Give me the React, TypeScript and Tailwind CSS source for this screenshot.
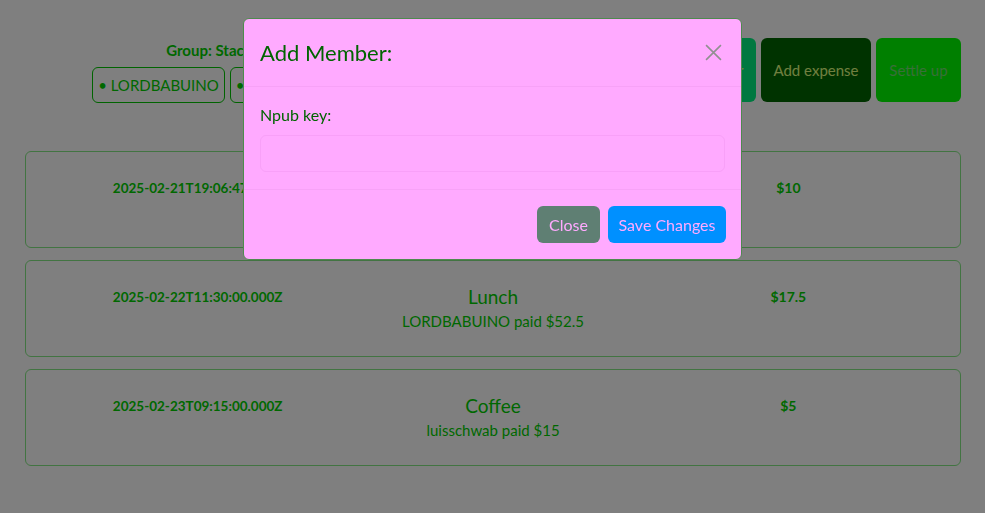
import React from "react";

type Expense = {
  date: string;
  title: string;
  payer: string;
  paid: string;
  share: string;
};

const expenses: Expense[] = [
  { date: "2025-02-21T19:06:47.000Z", title: "Dinner", payer: "LORDBABUINO", paid: "$30", share: "$10" },
  { date: "2025-02-22T11:30:00.000Z", title: "Lunch", payer: "LORDBABUINO", paid: "$52.5", share: "$17.5" },
  { date: "2025-02-23T09:15:00.000Z", title: "Coffee", payer: "luisschwab", paid: "$15", share: "$5" },
];

const members = ["LORDBABUINO", "luisschwab"];

function ExpenseRow({ e }: { e: Expense }) {
  return (
    <div className="grid h-[97px] grid-cols-3 rounded-md border border-[#84e884] px-6 pt-[24px] text-center text-[#00d000]">
      <div className="text-[13.5px] font-bold leading-[24px]">{e.date}</div>
      <div className="flex flex-col items-center">
        <div className="text-[19px] leading-[24px]">{e.title}</div>
        <div className="text-[15px] leading-[25px]">
          {e.payer} paid {e.paid}
        </div>
      </div>
      <div className="text-[14px] font-bold leading-[24px]">{e.share}</div>
    </div>
  );
}

function AddMemberModal() {
  return (
    <div className="fixed inset-0 bg-black/50">
      <div className="absolute left-[243px] top-[18px] w-[499px] rounded-md border border-[#4f8a4f] bg-[#ffaaff] text-[#006400]">
        <div className="flex items-center justify-between border-b border-[#f7a2f7] px-4 pb-[17px] pt-[17px]">
          <h5 className="text-[22px] leading-[33px]">Add Member:</h5>
          <button className="flex h-6 w-6 items-center justify-center text-[#909090]">
            <svg width="17" height="17" viewBox="0 0 16 16" fill="none" stroke="currentColor" strokeWidth="1.5">
              <path d="M1 1l14 14M15 1L1 15" />
            </svg>
          </button>
        </div>
        <div className="border-b border-[#f7a2f7] px-4 pb-[17px] pt-4">
          <label className="mb-2 block text-[16px] leading-[24px]">Npub key:</label>
          <input
            type="text"
            className="block h-[37px] w-full rounded-md border border-[#f8a0f8] bg-transparent px-3 outline-none"
          />
        </div>
        <div className="flex justify-end gap-2 px-[15px] pb-[16px] pt-4">
          <button className="h-[37px] w-[63px] rounded-md bg-[#5f7f73] text-[16px] text-[#ffaaff]">Close</button>
          <button className="h-[37px] w-[118px] rounded-md bg-[#0090ff] text-[16px] text-[#ffaaff]">Save Changes</button>
        </div>
      </div>
    </div>
  );
}

export default function App() {
  return (
    <div className="relative min-h-screen bg-white font-['Lato','Liberation_Sans',sans-serif]">
      <div className="pl-[25px] pr-6 pt-[38px]">
        <header className="flex items-start justify-between">
          <div className="flex w-[368px] flex-col items-center text-[#00d000]">
            <div className="text-[15px] font-bold leading-[24px]">Group: Stack</div>
            <div className="mt-[5px] flex gap-[5px]">
              {members.map((m) => (
                <div key={m} className="flex h-[36px] items-center rounded-md border border-[#00c800] px-[5px] text-[15px]">
                  • {m}
                </div>
              ))}
            </div>
          </div>
          <div className="flex gap-[5px]">
            <button className="h-[64px] w-[110px] rounded-md bg-[#00f080] text-[15px] text-[#e0ff80]">Add member</button>
            <button className="h-[64px] w-[110px] rounded-md bg-[#006600] text-[15px] text-[#e0ff80]">Add expense</button>
            <button className="h-[64px] w-[85px] rounded-md bg-[#00ff00] text-[15px] text-[#70e070]">Settle up</button>
          </div>
        </header>
        <main className="mt-[48px] flex flex-col gap-[12px]">
          {expenses.map((e) => (
            <ExpenseRow key={e.date} e={e} />
          ))}
        </main>
      </div>
      <AddMemberModal />
    </div>
  );
}
